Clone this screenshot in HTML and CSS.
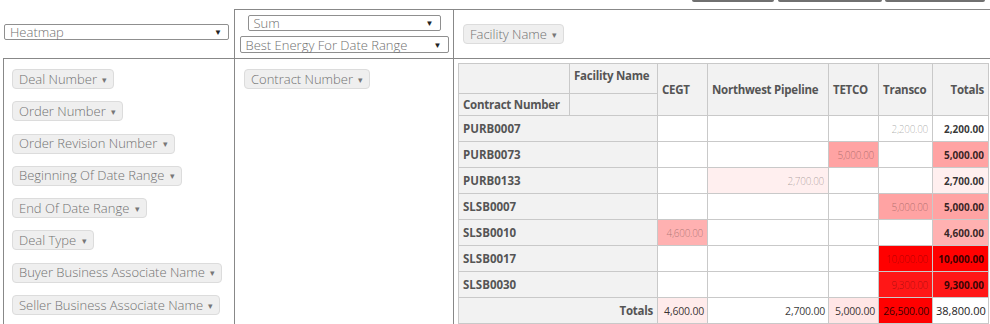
FILE: index.html
```html
<!DOCTYPE html>
<html>
<head>
<meta charset="utf-8">
<link rel="stylesheet" href="styles.css">
</head>
<body>
<div class="toolbar">
  <span class="tbtn b1"></span><span class="tbtn b2"></span><span class="tbtn b3"></span>
</div>
<div class="pvt-ui">
  <div class="cell renderer">
    <div class="sel sel-renderer"><span>Heatmap</span><span class="caret">▼</span></div>
  </div>
  <div class="cell aggregator">
    <div class="sel sel-agg"><span>Sum</span><span class="caret">▼</span></div>
    <div class="sel sel-val"><span>Best Energy For Date Range</span><span class="caret">▼</span></div>
  </div>
  <div class="cell cols">
    <span class="pill">Facility Name <span class="tri">▾</span></span>
  </div>
  <div class="cell unused">
    <ul class="pill-list">
      <li><span class="pill">Deal Number <span class="tri">▾</span></span></li>
      <li><span class="pill">Order Number <span class="tri">▾</span></span></li>
      <li><span class="pill">Order Revision Number <span class="tri">▾</span></span></li>
      <li><span class="pill">Beginning Of Date Range <span class="tri">▾</span></span></li>
      <li><span class="pill">End Of Date Range <span class="tri">▾</span></span></li>
      <li><span class="pill">Deal Type <span class="tri">▾</span></span></li>
      <li><span class="pill">Buyer Business Associate Name <span class="tri">▾</span></span></li>
      <li><span class="pill">Seller Business Associate Name <span class="tri">▾</span></span></li>
    </ul>
  </div>
  <div class="cell rows">
    <span class="pill">Contract Number <span class="tri">▾</span></span>
  </div>
  <div class="cell output">
    <table class="pvt">
      <colgroup>
        <col class="c-lab1"><col class="c-lab2"><col class="c-cegt"><col class="c-nw"><col class="c-tetco"><col class="c-transco"><col class="c-tot">
      </colgroup>
      <thead>
        <tr class="h1">
          <th></th>
          <th class="axis">Facility Name</th>
          <th class="col-label" rowspan="2">CEGT</th>
          <th class="col-label" rowspan="2">Northwest Pipeline</th>
          <th class="col-label" rowspan="2">TETCO</th>
          <th class="col-label" rowspan="2">Transco</th>
          <th class="col-label tot-label" rowspan="2">Totals</th>
        </tr>
        <tr class="h2">
          <th class="axis">Contract Number</th>
          <th></th>
        </tr>
      </thead>
      <tbody>
        <tr>
          <th class="row-label" colspan="2">PURB0007</th>
          <td class="val"></td><td class="val"></td><td class="val"></td>
          <td class="val" style="background:rgb(255,255,255)">2,200.00</td>
          <td class="total" style="background:rgb(255,255,255)">2,200.00</td>
        </tr>
        <tr>
          <th class="row-label" colspan="2">PURB0073</th>
          <td class="val"></td><td class="val"></td>
          <td class="val" style="background:rgb(255,163,163)">5,000.00</td>
          <td class="val"></td>
          <td class="total" style="background:rgb(255,163,163)">5,000.00</td>
        </tr>
        <tr>
          <th class="row-label" colspan="2">PURB0133</th>
          <td class="val"></td>
          <td class="val" style="background:rgb(255,239,239)">2,700.00</td>
          <td class="val"></td><td class="val"></td>
          <td class="total" style="background:rgb(255,239,239)">2,700.00</td>
        </tr>
        <tr>
          <th class="row-label" colspan="2">SLSB0007</th>
          <td class="val"></td><td class="val"></td><td class="val"></td>
          <td class="val" style="background:rgb(255,163,163)">5,000.00</td>
          <td class="total" style="background:rgb(255,163,163)">5,000.00</td>
        </tr>
        <tr>
          <th class="row-label" colspan="2">SLSB0010</th>
          <td class="val" style="background:rgb(255,177,177)">4,600.00</td>
          <td class="val"></td><td class="val"></td><td class="val"></td>
          <td class="total" style="background:rgb(255,177,177)">4,600.00</td>
        </tr>
        <tr>
          <th class="row-label" colspan="2">SLSB0017</th>
          <td class="val"></td><td class="val"></td><td class="val"></td>
          <td class="val" style="background:rgb(255,0,0)">10,000.00</td>
          <td class="total" style="background:rgb(255,0,0)">10,000.00</td>
        </tr>
        <tr>
          <th class="row-label" colspan="2">SLSB0030</th>
          <td class="val"></td><td class="val"></td><td class="val"></td>
          <td class="val" style="background:rgb(255,23,23)">9,300.00</td>
          <td class="total" style="background:rgb(255,23,23)">9,300.00</td>
        </tr>
        <tr class="totals-row">
          <th class="tot-row-label" colspan="2">Totals</th>
          <td class="coltot" style="background:rgb(255,235,235)">4,600.00</td>
          <td class="coltot" style="background:rgb(255,255,255)">2,700.00</td>
          <td class="coltot" style="background:rgb(255,230,230)">5,000.00</td>
          <td class="coltot" style="background:rgb(255,0,0)">26,500.00</td>
          <td class="grand">38,800.00</td>
        </tr>
      </tbody>
    </table>
  </div>
</div>
</body>
</html>
```
FILE: styles.css
```css
* { box-sizing: border-box; }
html, body { margin: 0; padding: 0; background: #fff; }
body {
  font-family: "Open Sans", "Liberation Sans", sans-serif;
  color: #666;
  overflow: hidden;
  width: 990px;
  height: 324px;
}

.toolbar {
  height: 2px;
  display: flex;
  justify-content: flex-end;
  padding-right: 5px;
}
.tbtn {
  display: block;
  height: 2px;
  background: #707070;
  border-radius: 0 0 3px 3px;
}
.b1 { width: 82px; margin-right: 4px; }
.b2 { width: 104px; margin-right: 3px; }
.b3 { width: 100px; }

.pvt-ui {
  margin: 7px 0 0 3px;
  display: grid;
  grid-template-columns: 231px 220px 1fr;
  grid-template-rows: 49px 1fr;
  height: 400px;
}
.cell { border: 0 solid #888; }

.renderer { padding: 15px 0 0 1px; }
.aggregator {
  border-left-width: 1px;
  border-right-width: 1px;
  border-top-width: 1px;
  display: flex;
  flex-direction: column;
  align-items: center;
  padding-top: 5px;
  gap: 5px;
}
.cols {
  border-top-width: 1px;
  padding: 14px 0 0 9px;
  display: flex;
  align-items: flex-start;
}
.unused { border-top-width: 1px; border-left-width: 1px; padding: 10px 0 0 8px; }
.rows {
  border-top-width: 1px;
  border-left-width: 1px;
  border-right-width: 1px;
  padding: 10px 0 0 9px;
  display: flex;
  align-items: flex-start;
}
.output { border-top-width: 1px; padding: 4px 0 0 4px; }

.sel {
  display: flex;
  align-items: center;
  justify-content: space-between;
  border: 1px solid #8f8f8f;
  border-radius: 2px;
  background: #fff;
  font-size: 13px;
  font-weight: 300;
  color: #707070;
  padding: 0 6px 0 5px;
  line-height: 14px;
}
.caret { font-size: 8px; color: #222; }
.sel-renderer { width: 225px; height: 16px; }
.sel-agg { width: 193px; height: 16px; }
.sel-val { width: 209px; height: 17px; }

.pill {
  display: flex;
  align-items: center;
  height: 20px;
  padding: 0 6px;
  background: #efefef;
  border: 1px solid #dcdcdc;
  border-radius: 4px;
  font-size: 13px;
  font-weight: 300;
  line-height: 17px;
  color: #727272;
  white-space: pre;
}
.tri { font-size: 9px; color: #777; margin-left: 2px; }

.pill-list {
  list-style: none;
  margin: 0;
  padding: 0;
  display: flex;
  flex-direction: column;
  align-items: flex-start;
  gap: 12.3px;
}
.pill-list li { display: flex; }

.pvt {
  border-collapse: collapse;
  table-layout: fixed;
  width: 530px;
  font-size: 12px;
}
.c-lab1 { width: 111px; }
.c-lab2 { width: 88px; }
.c-cegt { width: 50px; }
.c-nw { width: 121px; }
.c-tetco { width: 50px; }
.c-transco { width: 54px; }
.c-tot { width: 56px; }

.pvt th, .pvt td {
  border: 1px solid #c9c9c9;
  padding: 0 4px;
  white-space: nowrap;
  overflow: hidden;
}
.pvt th {
  background: #f2f2f2;
  color: #555;
  font-weight: 700;
  font-size: 11.5px;
  letter-spacing: -0.25px;
  text-align: left;
}
.pvt tr.h1 { height: 30px; }
.pvt tr.h2 { height: 22px; }
.pvt tbody tr { height: 26px; }
.pvt th.axis { vertical-align: middle; }
.pvt tr.h1 th.axis { vertical-align: top; padding-top: 4px; }
.pvt th.col-label { vertical-align: middle; padding-top: 0; }
.pvt th.tot-label { text-align: right; }
.pvt th.row-label { letter-spacing: 0; }
.pvt th.tot-row-label { text-align: right; }

.pvt td {
  text-align: right;
  background: #fff;
}
.pvt td.val {
  font-size: 10px;
  font-weight: 300;
  color: rgba(0, 0, 0, 0.34);
  letter-spacing: -0.3px;
}
.pvt td.total {
  font-size: 10px;
  font-weight: 700;
  color: rgba(0, 0, 0, 0.8);
}
.pvt td.coltot {
  font-size: 10.5px;
  font-weight: 500;
  color: rgba(0, 0, 0, 0.8);
  letter-spacing: -0.2px;
  padding: 0 3px;
}
.pvt td.grand {
  font-size: 11px;
  font-weight: 400;
  color: #222;
  padding: 0 3px;
}
```
